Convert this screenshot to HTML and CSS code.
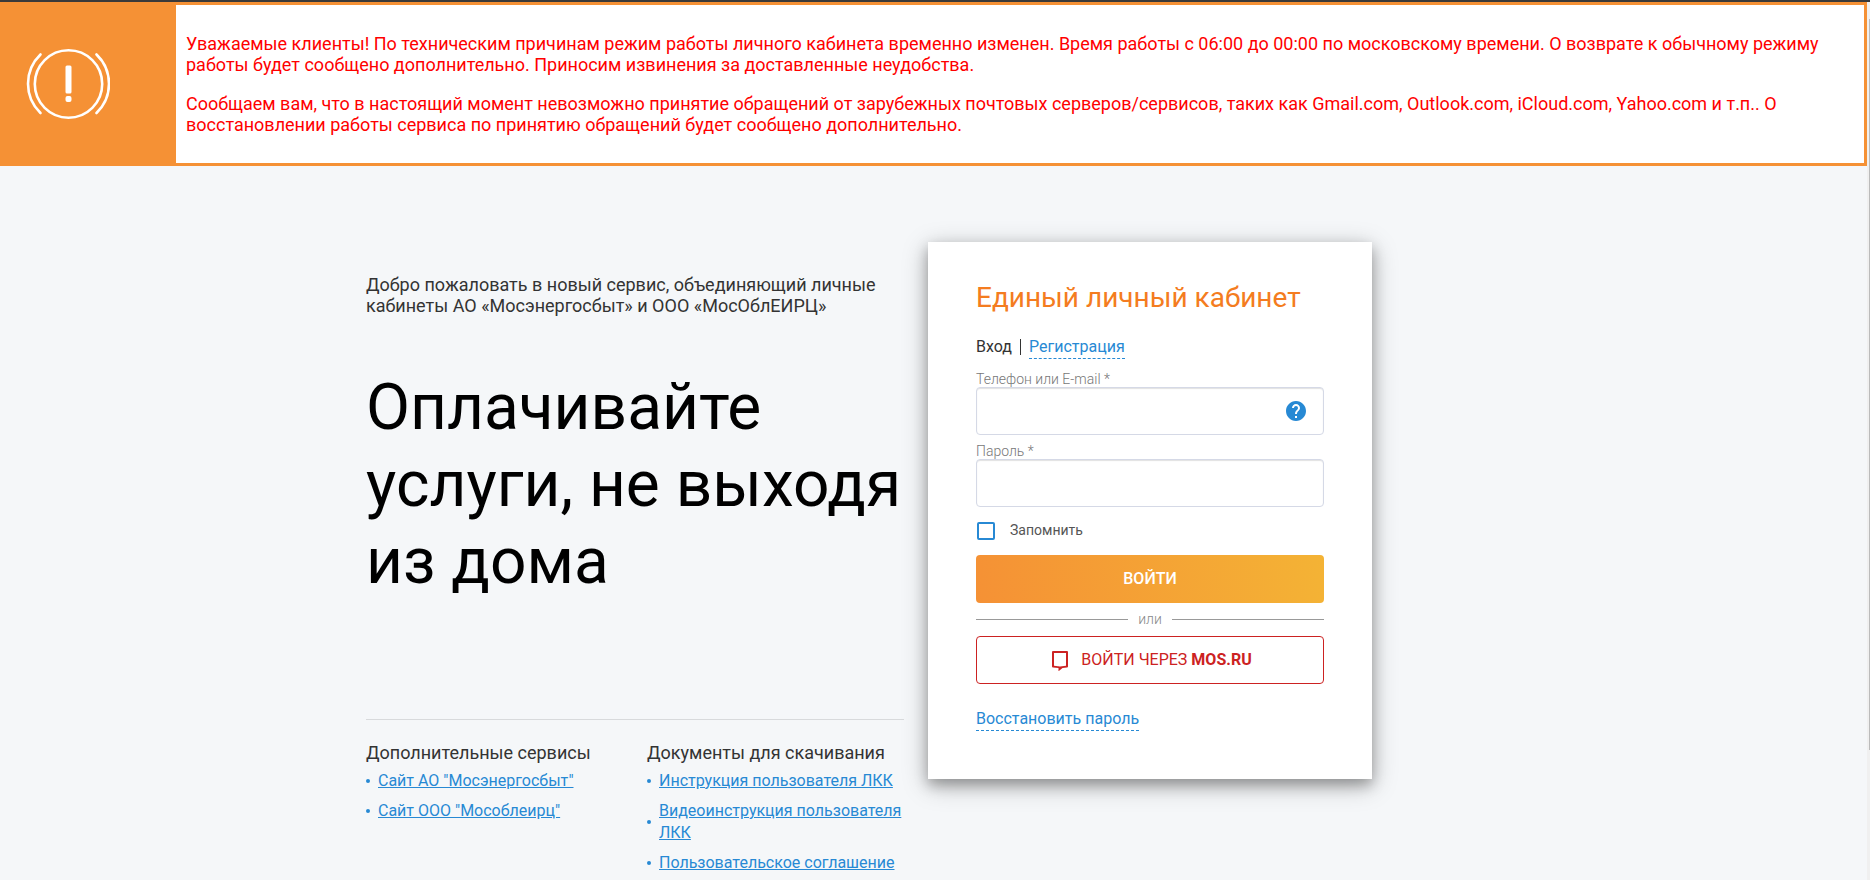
FILE: index.html
```
<!DOCTYPE html>
<html lang="ru">
<head>
    <meta charset="UTF-8">
    <meta name="viewport" content="width=device-width, initial-scale=1.0">
    <title>Единый личный кабинет</title>
    <link rel="stylesheet" href="styles.css">
</head>
<body>
    <div class="notice">
        <div class="notice-icon">
            <svg width="84" height="72" viewBox="0 0 84 72" fill="none" stroke="#fff" stroke-width="2.6" stroke-linecap="round">
                <circle cx="42.500" cy="36" r="33.7"/>
                <path d="M14.500 6.500A40.500 40.500 0 0 0 14.500 65"/>
                <path d="M70.500 6.500A40.500 40.500 0 0 1 70.500 65"/>
                <rect x="39.500" y="17.500" width="6" height="28" rx="1.500" fill="#fff" stroke="none"/>
                <rect x="39.500" y="48" width="6" height="6" rx="2" fill="#fff" stroke="none"/>
            </svg>
        </div>
        <div class="notice-text">
            <p>Уважаемые клиенты! По техническим причинам режим работы личного кабинета временно изменен. Время работы с 06:00 до 00:00 по московскому времени. О возврате к обычному режиму работы будет сообщено дополнительно. Приносим извинения за доставленные неудобства.</p>
            <p>Сообщаем вам, что в настоящий момент невозможно принятие обращений от зарубежных почтовых серверов/сервисов, таких как Gmail.com, Outlook.com, iCloud.com, Yahoo.com и т.п.. О восстановлении работы сервиса по принятию обращений будет сообщено дополнительно.</p>
        </div>
    </div>
    <main class="container">
        <section class="promo">
            <p class="welcome">Добро пожаловать в новый сервис, объединяющий личные кабинеты АО «Мосэнергосбыт» и ООО «МосОблЕИРЦ»</p>
            <h1>Оплачивайте услуги, не выходя из дома</h1>
            <div class="links">
                <div>
                    <h2>Дополнительные сервисы</h2>
                    <ul>
                        <li><a href="#">Сайт АО "Мосэнергосбыт"</a></li>
                        <li><a href="#">Сайт ООО "Мособлеирц"</a></li>
                    </ul>
                </div>
                <div>
                    <h2>Документы для скачивания</h2>
                    <ul>
                        <li><a href="#">Инструкция пользователя ЛКК</a></li>
                        <li><a href="#">Видеоинструкция пользователя ЛКК</a></li>
                        <li><a href="#">Пользовательское соглашение</a></li>
                    </ul>
                </div>
            </div>
        </section>
        <form class="login">
            <h2 class="login-title">Единый личный кабинет</h2>
            <div class="tabs">
                <span>Вход</span>
                <span class="tabs-line"></span>
                <a href="#" class="dashed">Регистрация</a>
            </div>
            <div class="field">
                <label for="login">Телефон или E-mail *</label>
                <input type="text" id="login">
                <button type="button" class="help" aria-label="Помощь">
                    <svg width="20" height="20" viewBox="2 2 20 20">
                        <path fill="#2789d4" d="M12 2C6.480 2 2 6.480 2 12s4.480 10 10 10 10-4.480 10-10S17.520 2 12 2zm1 17h-2v-2h2v2zm2.070-7.750l-.9.920C13.450 12.900 13 13.500 13 15h-2v-.5c0-1.100.45-2.100 1.170-2.830l1.240-1.260c.37-.36.590-.86.590-1.410 0-1.100-.9-2-2-2s-2 .9-2 2H8c0-2.210 1.790-4 4-4s4 1.790 4 4c0 .88-.36 1.680-.93 2.250z"/>
                    </svg>
                </button>
            </div>
            <div class="field">
                <label for="password">Пароль *</label>
                <input type="password" id="password">
            </div>
            <div class="remember">
                <input type="checkbox" id="remember">
                <label for="remember">Запомнить</label>
            </div>
            <button type="submit" class="btn btn-login">ВОЙТИ</button>
            <div class="or">или</div>
            <button type="button" class="btn btn-mos">
                <svg width="16" height="20" viewBox="0 0 16 20" fill="#cc2222">
                    <path fill-rule="evenodd" d="M1 0h14q1 0 1 1v14.500q0 1-1 1l-4.500.5L6.500 20.300V17L1 16.500q-1 0-1-1V1q0-1 1-1zM2 2v12.700l6 .8 6-.8V2z"/>
                </svg>
                <span>ВОЙТИ ЧЕРЕЗ <b>MOS.RU</b></span>
            </button>
            <a href="#" class="dashed restore">Восстановить пароль</a>
        </form>
    </main>
    <div class="scroll"></div>
</body>
</html>
```

FILE: styles.css
```
* {
    box-sizing: border-box;
}
body {
    margin: 0;
    padding-right: 3px;
    height: 100vh;
    overflow: hidden;
    font-family: Roboto, "Liberation Sans", sans-serif;
    font-size: 16px;
    color: #333;
    background-color: #f5f7f9;
    border-top: 2px solid #3a3a3a;
}
a {
    color: #2789d4;
}
.notice {
    display: flex;
    background-color: #fff;
    border: 3px solid #f59135;
}
.notice-icon {
    flex: 0 0 173px;
    display: flex;
    align-items: center;
    padding-left: 23px;
    background-color: #f59135;
}
.notice-text {
    padding: 10px;
    font-size: 18px;
    line-height: 21px;
    color: #f00;
}
.notice-text p {
    margin: 18px 0;
}
.container {
    display: flex;
    align-items: flex-start;
    gap: 24px;
    max-width: 1135px;
    margin: 76px auto 0;
}
.promo {
    flex: 0 1 538px;
    padding-top: 32px;
}
.welcome {
    margin: 0 0 53px;
    font-size: 18px;
    line-height: 21px;
}
h1 {
    margin: 0 0 119px;
    font-size: 64px;
    font-weight: 400;
    line-height: 77px;
    color: #000;
}
.links {
    display: grid;
    grid-template-columns: 1fr 1fr;
    gap: 24px;
    padding-top: 22px;
    border-top: 1px solid #d8dadc;
}
.links h2 {
    margin: 0 0 7px;
    font-size: 18px;
    font-weight: 400;
    line-height: 21px;
}
.links ul {
    margin: 0;
    padding: 0;
    list-style: none;
}
.links li {
    display: flex;
    align-items: center;
    gap: 8px;
    margin-bottom: 8px;
    line-height: 22px;
}
.links li::before {
    content: "";
    flex: 0 0 4px;
    height: 4px;
    border-radius: 50%;
    background-color: #2789d4;
}
.login {
    flex: 0 1 444px;
    padding: 40px 48px 48px;
    background-color: #fff;
    box-shadow: 0 6px 12px rgba(0,0,0,0.25), 0 6px 24px rgba(0,0,0,0.28);
}
.login-title {
    margin: 0 0 22px;
    font-size: 28px;
    font-weight: 400;
    line-height: 32px;
    color: #f47c20;
}
.tabs {
    display: flex;
    align-items: flex-start;
    gap: 8px;
    margin-bottom: 12px;
    line-height: 22px;
}
.tabs-line {
    width: 1px;
    height: 16px;
    margin-top: 3px;
    background-color: #333;
}
.dashed {
    border-bottom: 1px dashed #2789d4;
    text-decoration: none;
    line-height: 22px;
}
.field {
    position: relative;
    margin-bottom: 8px;
}
.field label {
    display: block;
    font-size: 14px;
    font-weight: 300;
    line-height: 16px;
    color: #777;
}
.field input {
    display: block;
    width: 100%;
    height: 48px;
    padding: 0 48px 0 16px;
    border: 1px solid #d5d9e6;
    border-radius: 4px;
    box-shadow: inset 0 1px 1px rgba(0,0,0,0.12);
    background-color: #fff;
    font: inherit;
}
.help {
    position: absolute;
    right: 18px;
    bottom: 14px;
    display: flex;
    padding: 0;
    border: none;
    background: none;
    cursor: pointer;
}
.remember {
    display: flex;
    align-items: flex-start;
    gap: 15px;
    margin: 15px 0;
    padding-left: 1px;
    font-size: 14px;
    line-height: 16px;
    color: #555;
}
.remember input {
    appearance: none;
    width: 18px;
    height: 18px;
    margin: 0;
    border: 2px solid #2789d4;
    border-radius: 2px;
}
.btn {
    display: flex;
    align-items: center;
    justify-content: center;
    gap: 13px;
    width: 100%;
    height: 48px;
    padding: 0 0 2px;
    border: none;
    border-radius: 4px;
    font-family: inherit;
    font-size: 16px;
    cursor: pointer;
}
.btn-login {
    color: #fff;
    font-weight: 500;
    background: linear-gradient(80deg, #f59135, #f4b335);
}
.btn-mos {
    padding-left: 4px;
    border: 1px solid #cc2222;
    color: #cc2222;
    background-color: #fff;
}
.btn-mos svg {
    margin-top: 3px;
}
.or {
    display: flex;
    align-items: center;
    gap: 10px;
    margin: 8px 0;
    font-size: 14px;
    font-weight: 300;
    line-height: 17px;
    color: #888;
}
.or::before,
.or::after {
    content: "";
    flex: 1;
    border-top: 1px solid #999;
}
.restore {
    display: block;
    width: fit-content;
    margin-top: 24px;
}
.scroll {
    position: absolute;
    top: 2px;
    right: 0;
    bottom: 0;
    width: 3px;
    padding: 17px 0 130px 2px;
    background-color: #f0f0f0;
}
.scroll::before {
    content: "";
    display: block;
    height: 100%;
    background-color: #bbb;
}
```
